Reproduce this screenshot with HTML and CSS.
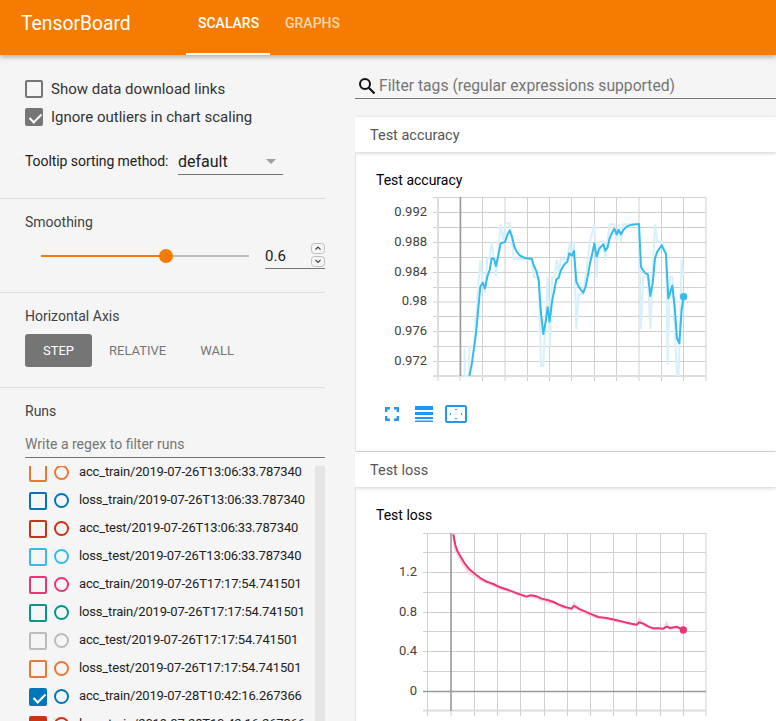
FILE: index.html
```html
<!DOCTYPE html>
<html lang="en">
<head>
<meta charset="UTF-8" />
<title>TensorBoard</title>
<link rel="stylesheet" href="styles.css">
</head>
<body>

<header class="topbar">
<div class="brand">TensorBoard</div>
<nav class="tabs">
<a class="tab active">Scalars</a>
<a class="tab">Graphs</a>
</nav>
</header>

<div class="page">
<aside class="sidebar">

<section class="side-section options">
<label class="check-row"><span class="box"></span>Show data download links</label>
<label class="check-row"><span class="box checked"></span>Ignore outliers in chart scaling</label>
<div class="sort-row">
<span class="sort-label">Tooltip sorting method:</span>
<div class="dropdown"><span>default</span><i class="caret"></i></div>
</div>
</section>

<section class="side-section smoothing">
<h3 class="side-title">Smoothing</h3>
<div class="slider-row">
<div class="slider"><div class="slider-fill"></div><div class="slider-thumb"></div></div>
<div class="number-input">
<span>0.6</span>
<div class="spinner">
<svg width="14" height="11" viewBox="0 0 14 11"><rect x="0.5" y="0.5" width="13" height="10" rx="3" fill="#f5f5f5" stroke="#bdbdbd"/><path d="M4.5 6.5L7 4l2.5 2.5" fill="none" stroke="#444" stroke-width="1.2"/></svg>
<svg width="14" height="11" viewBox="0 0 14 11"><rect x="0.5" y="0.5" width="13" height="10" rx="3" fill="#f5f5f5" stroke="#bdbdbd"/><path d="M4.5 4L7 6.5 9.5 4" fill="none" stroke="#444" stroke-width="1.2"/></svg>
</div>
</div>
</div>
</section>

<section class="side-section axis">
<h3 class="side-title">Horizontal Axis</h3>
<div class="axis-btns">
<button class="axis-btn selected">Step</button>
<button class="axis-btn">Relative</button>
<button class="axis-btn">Wall</button>
</div>
</section>

<section class="side-section runs">
<h3 class="side-title">Runs</h3>
<div class="runs-filter">Write a regex to filter runs</div>
<div class="runs-scroll">
<div class="runs-list">
<div class="run run-orange"><span class="run-box"></span><span class="run-dot"></span><span class="run-name">acc_train/2019-07-26T13:06:33.787340</span></div>
<div class="run run-blue"><span class="run-box"></span><span class="run-dot"></span><span class="run-name">loss_train/2019-07-26T13:06:33.787340</span></div>
<div class="run run-red"><span class="run-box"></span><span class="run-dot"></span><span class="run-name">acc_test/2019-07-26T13:06:33.787340</span></div>
<div class="run run-cyan"><span class="run-box"></span><span class="run-dot"></span><span class="run-name">loss_test/2019-07-26T13:06:33.787340</span></div>
<div class="run run-magenta"><span class="run-box"></span><span class="run-dot"></span><span class="run-name">acc_train/2019-07-26T17:17:54.741501</span></div>
<div class="run run-teal"><span class="run-box"></span><span class="run-dot"></span><span class="run-name">loss_train/2019-07-26T17:17:54.741501</span></div>
<div class="run run-grey"><span class="run-box"></span><span class="run-dot"></span><span class="run-name">acc_test/2019-07-26T17:17:54.741501</span></div>
<div class="run run-orange"><span class="run-box"></span><span class="run-dot"></span><span class="run-name">loss_test/2019-07-26T17:17:54.741501</span></div>
<div class="run run-blue"><span class="run-box checked"></span><span class="run-dot"></span><span class="run-name">acc_train/2019-07-28T10:42:16.267366</span></div>
<div class="run run-red"><span class="run-box checked"></span><span class="run-dot"></span><span class="run-name">loss_train/2019-07-28T10:42:16.267366</span></div>
</div>
<div class="runs-track"></div>
</div>
</section>

</aside>

<main class="content">
<div class="tag-filter">
<svg class="search-icon" width="18" height="18" viewBox="0 0 18 18"><circle cx="7" cy="7" r="5" fill="none" stroke="#111" stroke-width="2"/><path d="M10.8 10.8L16.5 16.5" stroke="#111" stroke-width="2.2"/></svg>
<span>Filter tags (regular expressions supported)</span>
</div>

<section class="category">
<div class="category-head">Test accuracy</div>
<div class="category-body">
<div class="chart-title">Test accuracy</div>
<svg class="chart" width="350" height="200" viewBox="0 0 350 200">
<path class="grid" d="M68 7.5V191M90 7.5V191M112.500 7.500V191M135 7.500V191M157.500 7.500V191M179.500 7.500V191M201.500 7.500V191M224.500 7.500V191M246.500 7.500V191M269 7.500V191M291.500 7.500V191M313.500 7.500V191M336 7.500V191"/>
<path class="grid" d="M63 7.500H336M63 22.500H336M63 37.500H336M63 52.500H336M63 67.500H336M63 82.500H336M63 97.500H336M63 112H336M63 126.500H336M63 141.500H336M63 156.500H336M63 171.500H336"/>
<path class="grid-edge" d="M68 7V186M63 186H336"/>
<path class="axis-line" d="M90.500 7V186"/>
<g class="tick-labels">
<text x="57" y="26">0.992</text>
<text x="57" y="56">0.988</text>
<text x="57" y="86">0.984</text>
<text x="57" y="115">0.98</text>
<text x="57" y="145">0.976</text>
<text x="57" y="175">0.972</text>
</g>
<g transform="scale(.3333)">
<polyline class="raw raw-cyan" points="284,475 284,558 298,558 298,470 312,470 318,380 331,210 338,280 345,310 352,205 359,205 365,155 378,260 392,103 399,150 407,100 420,100 432,208 485,208 492,262 506,262 513,527 520,527 533,262 540,470 546,262 553,262 561,208 566,262 572,208 592,208 600,155 606,208 612,155 619,418 626,312 640,312 660,155 673,103 680,262 687,155 700,155 706,208 719,103 733,103 740,155 746,103 753,155 760,103 807,103 813,418 820,260 834,260 841,418 855,103 862,155 875,155 888,190 893,525 900,260 907,260 921,555 926,555 935,208 941,260"/>
<polyline class="smooth smooth-cyan" points="298,558 305,525 318,430 331,290 338,278 345,295 352,260 359,240 365,205 372,206 378,228 385,195 392,160 405,156 412,135 419,121 426,140 433,170 440,185 450,197 465,204 485,206 492,228 499,243 506,270 513,370 520,432 527,395 533,352 539,395 546,335 553,300 559,268 566,264 572,243 580,228 586,220 592,215 598,190 606,197 612,183 619,275 626,290 633,300 640,308 647,290 653,260 660,220 667,190 673,160 680,200 687,178 693,170 700,163 706,182 713,172 719,145 726,128 733,116 740,133 746,120 753,133 760,120 770,110 785,104 807,102 813,230 820,242 827,250 834,254 841,318 848,280 855,205 862,185 875,166 888,192 895,325 900,310 907,287 914,350 921,445 928,460 935,360 941,320"/>
<circle cx="941" cy="320" r="11" fill="#33bbee"/>
</g>
</svg>
<div class="chart-actions">
<svg width="14" height="14" viewBox="0 0 14 14"><path d="M1.2 5V1.200h3.800M9 1.200h3.800v3.800M12.800 9v3.800H9M5 12.800H1.200V9" fill="none" stroke="#2196f3" stroke-width="2.400"/></svg>
<svg width="18" height="16" viewBox="0 0 18 16"><path d="M0 0h18v4H0zM0 6h18v3H0zM0 11h18v2H0zM0 14.500h18v1.500H0z" fill="#2196f3"/></svg>
<svg class="fit-icon" width="22" height="18" viewBox="0 0 22 18"><rect x="1" y="1" width="20" height="16" rx="1.500" fill="none" stroke="#2196f3" stroke-width="2"/><path d="M9.500 5l1.500-1.500L12.500 5zM9.500 13l1.500 1.500 1.500-1.500zM6 7.500L4.500 9 6 10.500zM16 7.500L17.500 9 16 10.500z" fill="#2196f3"/></svg>
</div>
</div>
</section>

<section class="category">
<div class="category-head">Test loss</div>
<div class="category-body">
<div class="chart-title">Test loss</div>
<svg class="chart" width="350" height="200" viewBox="0 0 350 200">
<path class="grid" d="M57.500 8V191M81 8V191M104.500 8V191M127.500 8V191M150.500 8V191M174.500 8V191M197.500 8V191M220.500 8V191M243.500 8V191M266.500 8V191M290.500 8V191M313.500 8V191M336 8V191"/>
<path class="grid" d="M53 8.500H336M53 27.500H336M53 47.500H336M53 67.500H336M53 87.500H336M53 106.500H336M53 126.500H336M53 146.500H336"/>
<path class="grid-edge" d="M53 185.500H336"/>
<path class="axis-line" d="M53 166.500H336M81 8V186"/>
<g class="tick-labels">
<text x="47" y="51">1.2</text>
<text x="47" y="91">0.8</text>
<text x="47" y="130">0.4</text>
<text x="47" y="170">0</text>
</g>
<g transform="translate(-20 -85) scale(.3333)">
<polyline class="raw raw-pink" points="310,283 316,330 325,350 340,375 358,400 375,408 395,423 430,437 450,446 480,455 510,467 530,472 545,468 575,480 600,490 610,484 625,497 645,505 665,509 672,488 690,511 705,520 720,526 745,534 770,537 800,544 830,550 860,556 868,536 880,555 895,562 910,568 925,568 940,568 950,548 960,568 980,563 1000,572"/>
<polyline class="smooth smooth-pink" points="310,283 316,315 322,333 332,350 345,372 358,388 375,402 395,417 410,425 430,432 450,442 480,452 510,463 530,470 540,466 560,469 575,476 595,481 610,486 625,493 645,501 665,506 672,498 690,508 705,514 720,521 745,531 770,534 800,541 830,548 860,554 868,547 880,551 895,559 910,565 925,565 940,566 950,560 960,564 980,560 1000,570"/>
<circle cx="1000" cy="570" r="11" fill="#ee3377"/>
</g>
</svg>
</div>
</section>
</main>
</div>

</body>
</html>
```

FILE: styles.css
```css
* {
box-sizing: border-box;
}

html, body {
height: 100%;
}

body {
margin: 0;
height: 721px;
overflow: hidden;
background: #f5f5f5;
font-family: Roboto, sans-serif;
font-size: 14px;
color: #333;
display: flex;
flex-direction: column;
}

/* top bar */
.topbar {
height: 55px;
flex: none;
background: #f57c00;
color: #fff;
display: flex;
padding-left: 21px;
box-shadow: 0 2px 5px rgba(0, 0, 0, 0.3);
position: relative;
z-index: 5;
}

.brand {
font-size: 19.3px;
width: 165px;
line-height: 47px;
}

.tabs {
display: flex;
}

.tab {
height: 55px;
padding: 0 15px;
line-height: 47px;
font-size: 14px;
font-weight: 500;
text-transform: uppercase;
color: rgba(255, 255, 255, 0.7);
}

.tab.active {
width: 84px;
padding-left: 12px;
color: #fff;
border-bottom: 2px solid #fff;
}

/* left column */
.page {
flex: 1;
display: flex;
min-height: 0;
}

.sidebar {
width: 325px;
flex: none;
display: flex;
flex-direction: column;
}

.side-section {
padding-left: 25px;
border-bottom: 1px solid #ddd;
}

.side-title {
margin: 0;
font-size: 14px;
font-weight: 400;
line-height: 20px;
color: #424242;
}

.options {
padding-top: 25px;
padding-bottom: 23px;
}

.check-row {
display: flex;
align-items: center;
gap: 8px;
height: 18px;
margin-bottom: 10px;
font-size: 15px;
color: #333;
}

.box {
width: 18px;
height: 18px;
border: 2px solid #757575;
border-radius: 2px;
position: relative;
}

.box.checked {
background: #757575;
}

.box.checked::after,
.run-box.checked::after {
content: "";
position: absolute;
left: 4.5px;
top: 0.5px;
width: 5px;
height: 10px;
border: solid #fff;
border-width: 0 2px 2px 0;
transform: rotate(45deg);
}

.sort-row {
display: flex;
align-items: center;
margin-top: 20px;
}

.sort-label {
width: 153px;
letter-spacing: -0.07px;
color: #212121;
}

.dropdown {
width: 105px;
height: 29px;
padding-top: 2px;
border-bottom: 1px solid #757575;
font-size: 16px;
display: flex;
align-items: center;
justify-content: space-between;
padding-right: 7px;
color: #212121;
}

.caret {
border-left: 5px solid transparent;
border-right: 5px solid transparent;
border-top: 5px solid #9e9e9e;
}

.smoothing {
padding-top: 13px;
padding-bottom: 23px;
}

.slider-row {
display: flex;
align-items: center;
margin-top: 11px;
height: 26px;
}

.slider {
margin-left: 16px;
width: 208px;
height: 2px;
background: #bdbdbd;
position: relative;
}

.slider-fill {
width: 125px;
height: 2px;
background: #f57c00;
}

.slider-thumb {
position: absolute;
left: 118px;
top: -6px;
width: 14px;
height: 14px;
border-radius: 50%;
background: #f57c00;
}

.number-input {
margin-left: 16px;
width: 60px;
height: 26px;
border-bottom: 1px solid #757575;
font-size: 15px;
color: #212121;
display: flex;
align-items: center;
justify-content: space-between;
}

.spinner {
display: flex;
flex-direction: column;
gap: 2px;
margin-top: -1px;
}

.spinner svg {
display: block;
}

.axis {
padding-top: 13px;
padding-bottom: 20px;
}

.axis-btns {
display: flex;
margin-top: 8px;
}

.axis-btn {
min-width: 67px;
height: 33px;
padding: 0 17px;
border: none;
border-radius: 3px;
background: transparent;
font-family: Roboto, sans-serif;
font-size: 13px;
text-transform: uppercase;
color: #757575;
}

.axis-btn.selected {
background: #757575;
color: #fff;
}

.runs {
flex: 1;
min-height: 0;
border-bottom: none;
padding-top: 13px;
display: flex;
flex-direction: column;
}

.runs-filter {
flex: none;
margin-top: 11px;
height: 26px;
line-height: 24px;
border-bottom: 1px solid #757575;
color: #757575;
}

.runs-scroll {
flex: 1;
min-height: 0;
margin-top: 8px;
display: flex;
overflow: hidden;
}

.runs-list {
flex: 1;
margin-top: -2px;
padding-left: 4px;
}

.runs-track {
width: 10px;
flex: none;
background: #e5e5e5;
}

.run {
height: 28px;
display: flex;
align-items: flex-start;
font-size: 13px;
letter-spacing: -0.16px;
color: #212121;
white-space: nowrap;
}

.run-name {
margin-top: 2px;
line-height: 12px;
}

.run-box {
width: 18px;
height: 18px;
border: 2px solid var(--run);
border-radius: 2px;
margin-right: 7px;
position: relative;
flex: none;
}

.run-box.checked {
background: var(--run);
}

.run-dot {
width: 15px;
height: 15px;
margin-top: 1px;
margin-right: 10px;
border: 2px solid var(--run);
border-radius: 50%;
flex: none;
}

.run-orange { --run: #ee7733; }
.run-blue { --run: #0077bb; }
.run-red { --run: #cc3311; }
.run-cyan { --run: #33bbee; }
.run-magenta { --run: #ee3377; }
.run-teal { --run: #009988; }
.run-grey { --run: #bbbbbb; }

/* right column */
.content {
flex: 1;
min-width: 0;
margin-left: 30px;
overflow: hidden;
}

.tag-filter {
margin-top: 18px;
height: 26px;
border-bottom: 1px solid #757575;
display: flex;
align-items: center;
gap: 3px;
padding-left: 3px;
font-size: 15.7px;
color: #757575;
white-space: nowrap;
}

.search-icon {
flex: none;
}

.category-head {
height: 35px;
padding-left: 15px;
padding-top: 1px;
line-height: 35px;
background: #fff;
color: #555;
font-size: 14.5px;
box-shadow: 0 1px 4px rgba(0, 0, 0, 0.2);
position: relative;
}

.tag-filter + .category {
margin-top: 18px;
}

.category-body {
height: 299px;
margin-left: 1px;
margin-bottom: 1px;
padding: 18px 0 0 14px;
background: #fff;
box-shadow: 0 1px 3px rgba(0, 0, 0, 0.2);
}

.chart-title {
padding-left: 6px;
line-height: 20px;
color: #000;
}

.chart {
display: block;
}

.grid {
fill: none;
stroke: #d0d0d0;
stroke-width: 1;
}

.grid-edge {
fill: none;
stroke: #ddd;
stroke-width: 2;
}

.axis-line {
fill: none;
stroke: #999;
stroke-width: 1.5;
}

.tick-labels text {
font-family: Roboto, sans-serif;
font-size: 13px;
fill: #424242;
text-anchor: end;
}

.raw {
fill: none;
stroke-width: 6;
}

.raw-cyan {
stroke: #d6f1fb;
}

.raw-pink {
stroke: #fbd5e4;
}

.smooth {
fill: none;
stroke-width: 6;
stroke-linejoin: round;
}

.smooth-cyan {
stroke: #33bbee;
}

.smooth-pink {
stroke: #ee3377;
}

.chart-actions {
display: flex;
align-items: center;
gap: 16px;
margin-top: 15px;
padding-left: 15px;
}

.chart-actions svg {
display: block;
}

.chart-actions .fit-icon {
margin-left: -4px;
}
```
